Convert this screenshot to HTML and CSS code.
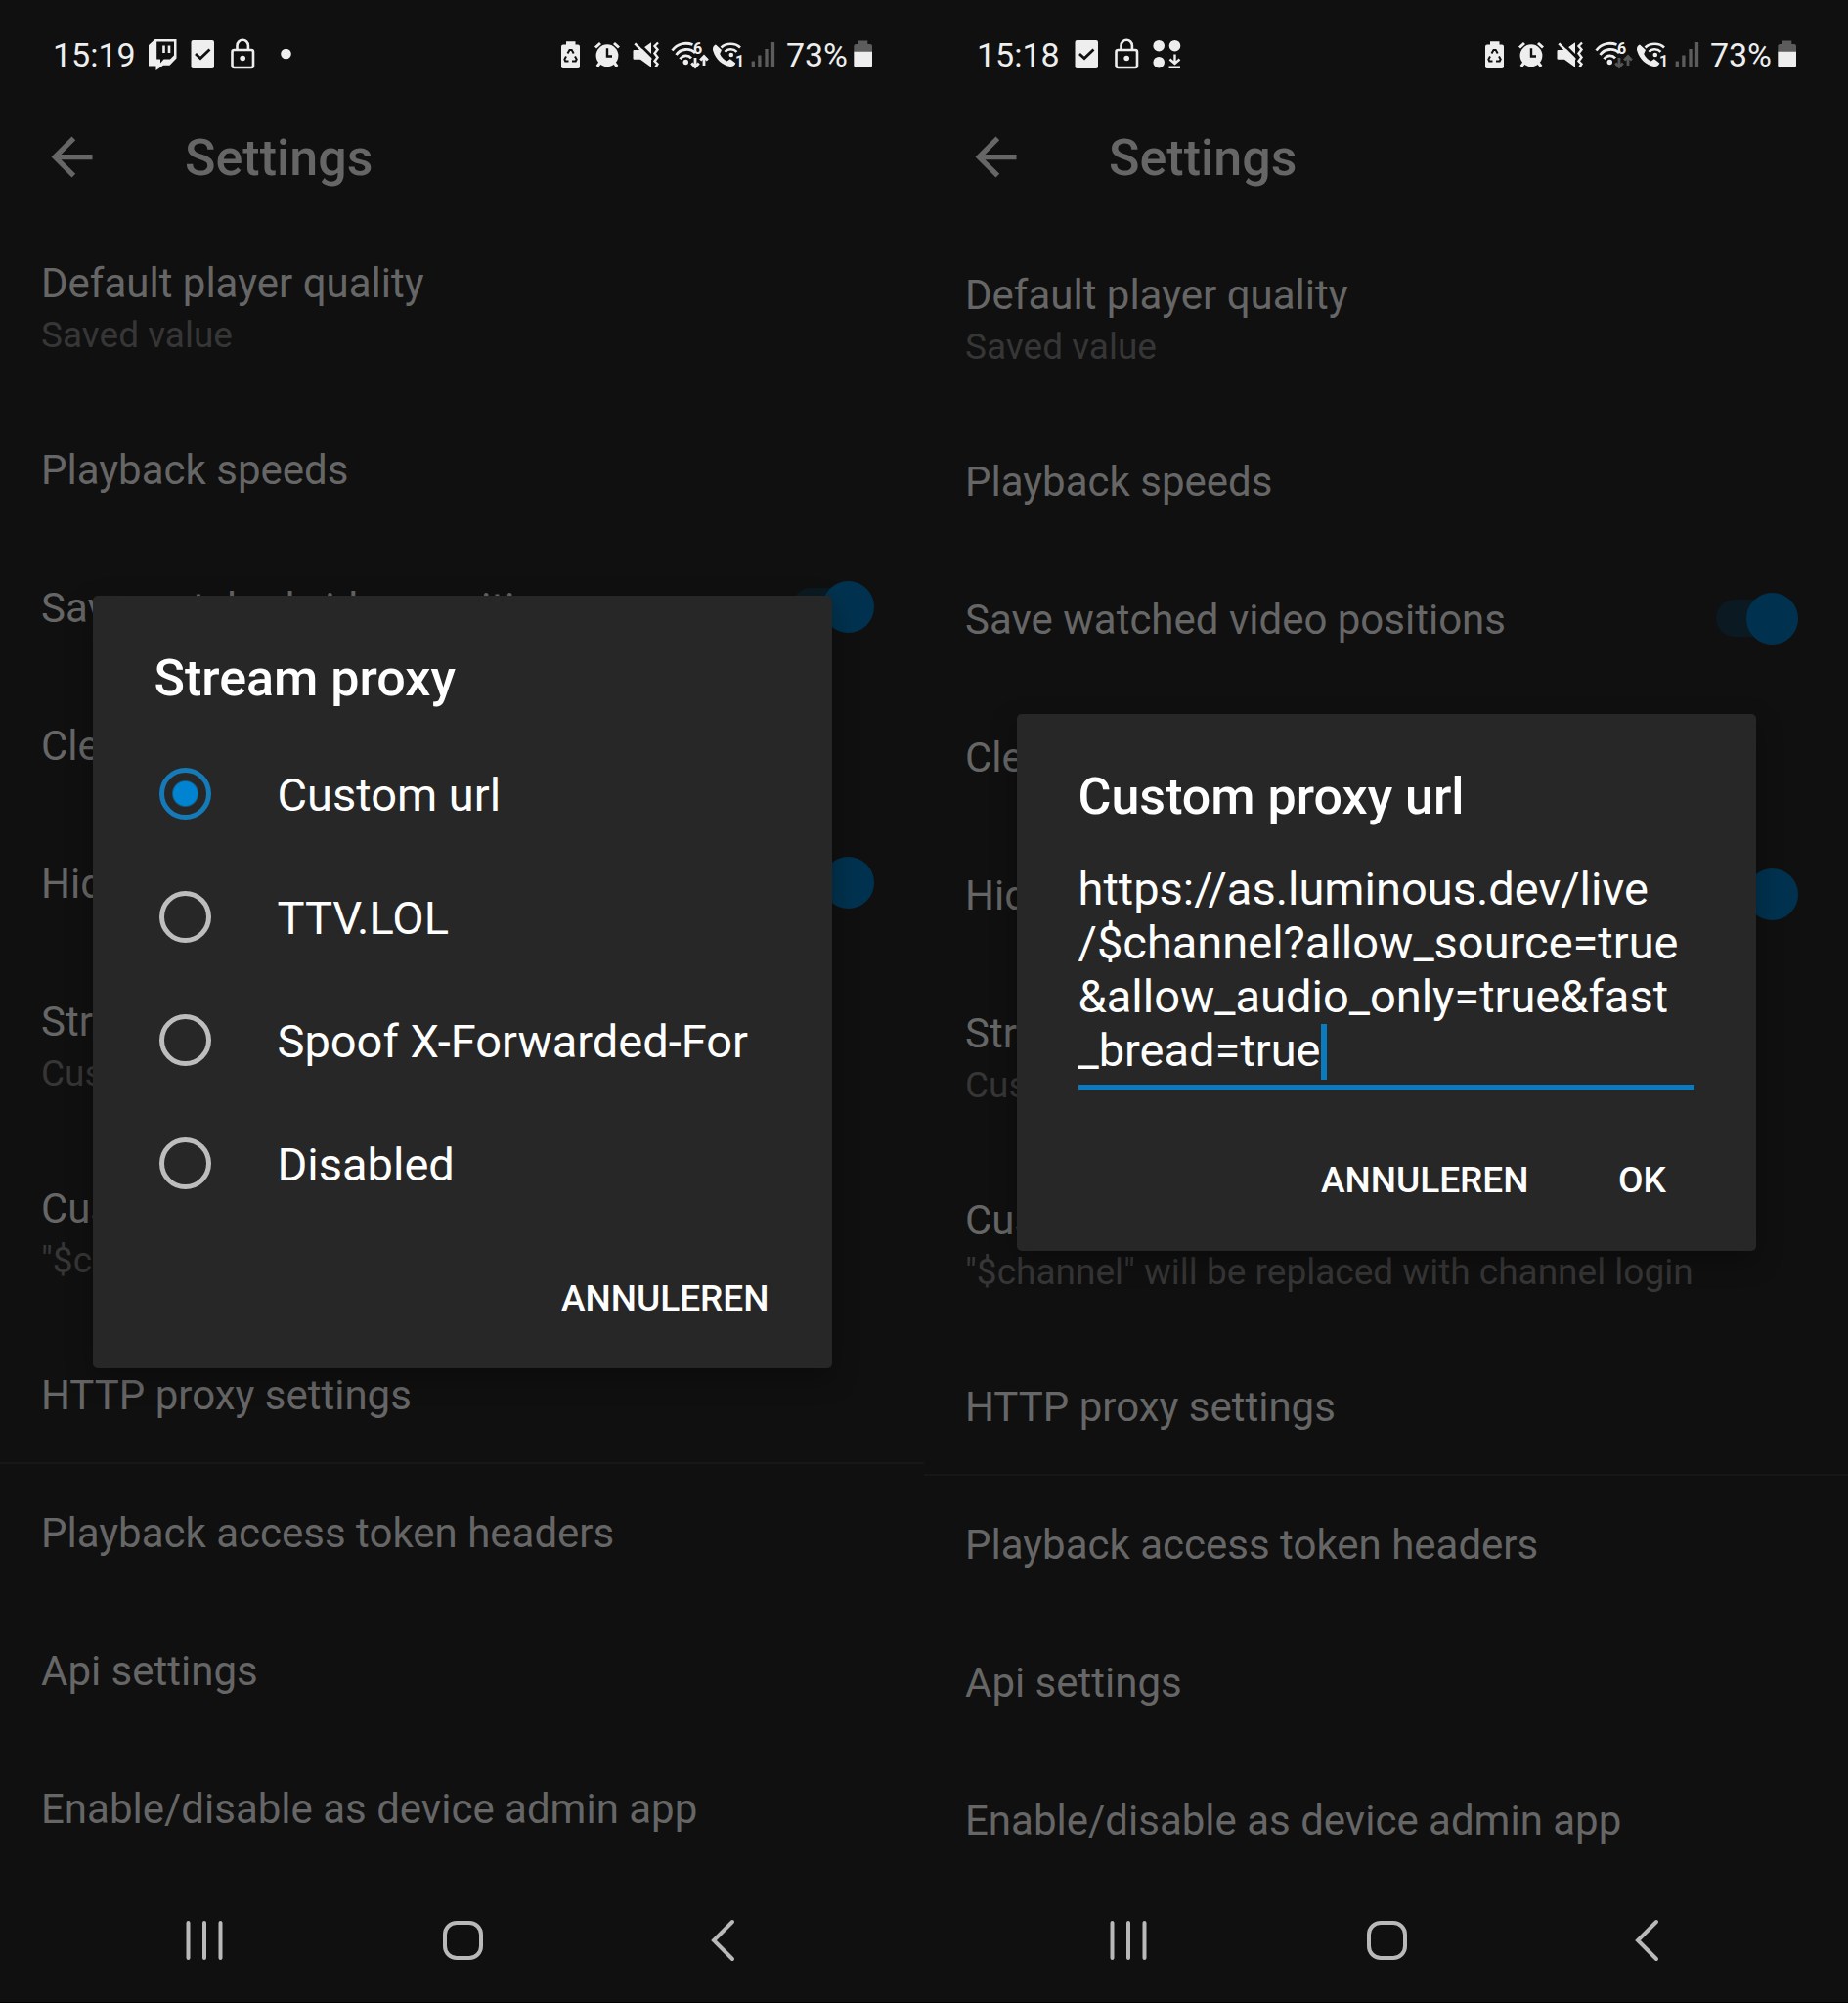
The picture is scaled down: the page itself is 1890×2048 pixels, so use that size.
FILE: index.html
```html
<!DOCTYPE html>
<html lang="nl">
<head>
  <meta charset="UTF-8">
  <title>Settings - Stream proxy</title>
  <meta name="viewport" content="width=device-width, initial-scale=1.0">
  <link rel="stylesheet" href="styles.css">
</head>
<body>

<!-- icon sprite -->
<svg class="sprite" aria-hidden="true">
  <symbol id="i-twitch" viewBox="0 0 41 36">
    <path fill="#eee" d="M12.500 3H34.500V22.500L27.500 29.700H21L13.500 35V30.500H6V9z"/>
    <path fill="#101010" d="M14.200 5.500H32V19.500L28 23.500H21.500L18 27.500V23.500H14.200z"/>
    <path stroke="#eee" stroke-width="2.600" d="M21.500 9.500V17M27 9.500V17"/>
  </symbol>
  <symbol id="i-check" viewBox="0 0 41 36">
    <rect x="8.500" y="4" width="23.500" height="29" rx="2" fill="#eee"/>
    <path d="M13 18l5 4.500 9.500-9" fill="none" stroke="#101010" stroke-width="2.800"/>
  </symbol>
  <symbol id="i-lock" viewBox="0 0 41 36">
    <rect x="9.500" y="14" width="21.500" height="18" rx="2" fill="none" stroke="#eee" stroke-width="2.600"/>
    <path d="M14.500 14V9.500a5.700 5.700 0 0 1 11.400 0V14" fill="none" stroke="#eee" stroke-width="2.600"/>
    <circle cx="20.200" cy="22.500" r="2.800" fill="#eee"/>
  </symbol>
  <symbol id="i-dot" viewBox="0 0 41 36">
    <circle cx="23.500" cy="18" r="5.300" fill="#eee"/>
  </symbol>
  <symbol id="i-apps" viewBox="0 0 41 36">
    <g fill="#eee">
      <circle cx="12.200" cy="9.700" r="5.800"/>
      <circle cx="28.500" cy="9.700" r="5.800"/>
      <circle cx="12.200" cy="26.700" r="5.800"/>
    </g>
    <path d="M28.500 18.500V28M23.500 23.500l5 4.500 5-4.500M22.500 31.700H34" fill="none" stroke="#eee" stroke-width="2.400"/>
  </symbol>
  <symbol id="i-recycle" viewBox="0 0 30 36">
    <path fill="#eee" d="M9 5.300h9.500v3.300H21a2 2 0 0 1 2 2V31a2 2 0 0 1-2 2H6a2 2 0 0 1-2-2V10.600a2 2 0 0 1 2-2h3z"/>
    <path fill="none" stroke="#101010" stroke-width="2" d="M10.500 17.500l2-3.500h2.200l2 3.500M18 20.500l1.700 3-1 2H15M11.500 25.500H8.200l-.8-2 1.600-3"/>
  </symbol>
  <symbol id="i-alarm" viewBox="0 0 42 36">
    <circle cx="21" cy="19.700" r="11.400" fill="#eee"/>
    <path fill="none" stroke="#eee" stroke-width="3" d="M9 11.500L14 7M33 11.500L28 7M10.800 31l3-4M31.200 31l-3-4"/>
    <path fill="none" stroke="#101010" stroke-width="2.400" d="M21 12.300v8.200h5"/>
  </symbol>
  <symbol id="i-mute" viewBox="0 0 38 36">
    <path fill="#eee" d="M6.500 14H13L24 6.300V31.700L13 23.700H6.500a1 1 0 0 1-1-1V15a1 1 0 0 1 1-1z"/>
    <path stroke="#101010" stroke-width="3" d="M9.500 5.500L26 22"/>
    <path stroke="#eee" stroke-width="2.600" d="M7.300 7.300L24 24"/>
    <path fill="none" stroke="#eee" stroke-width="2.400" d="M31 6.500l-3.500 3.500 3 3.500-3 4 3 4-3 4 3 3-2 3"/>
  </symbol>
  <symbol id="i-wifi" viewBox="0 0 46 36">
    <g fill="none" stroke="#eee" stroke-width="2.800">
      <path d="M7.500 14.500C13 7 21.500 6 28.500 8.500"/>
      <path d="M11.500 19C16 12.500 25.500 11.500 31 17"/>
      <path d="M15.500 23.300C18.500 18.800 24 18.800 27 22.300"/>
    </g>
    <circle cx="21.300" cy="26.500" r="2.700" fill="#eee"/>
    <text x="29" y="18" class="icon-digit">6</text>
    <path fill="none" stroke="currentColor" stroke-width="2.800" d="M31 22v9M27.200 27.500L31 31.500l3.800-4M40 30v-9M36.200 24.500L40 20.500l3.800 4"/>
  </symbol>
  <symbol id="i-call" viewBox="0 0 38 36">
    <path fill="#eee" d="M6 8.500C3 10 2.500 12.500 3.500 15.500C6 23.500 12.500 29.500 20.500 31C23.500 31.400 25.500 30 26.300 27.500L20.800 23.300L17.500 25.600C14.500 24.300 11.800 21.500 10.200 18L12 14z"/>
    <path fill="none" stroke="#eee" stroke-width="2.600" d="M11.500 11.500C16.500 6.500 26 6.500 31 11.500M15.500 15.800C18.500 12.300 24 12.300 27.500 15.800"/>
    <circle cx="21.800" cy="19" r="2.300" fill="#eee"/>
    <text x="26" y="31" class="icon-digit">1</text>
  </symbol>
  <symbol id="i-signal" viewBox="0 0 34 36">
    <path stroke="#5c5c5c" stroke-width="3.300" d="M6.300 25.500v6M12.900 19.500v12M20 13v18.500M26.500 6v25.500"/>
  </symbol>
  <symbol id="i-battery" viewBox="0 0 27 36">
    <path fill="#5c5c5c" d="M8.700 4.500h9.600V8H21a2 2 0 0 1 2 2v6H4.300v-6a2 2 0 0 1 2-2h2.400z"/>
    <path fill="#eee" d="M4.300 15.800H23V30a2 2 0 0 1-2 2H6.300a2 2 0 0 1-2-2z"/>
  </symbol>
  <symbol id="i-arrow" viewBox="0 0 24 24">
    <path fill="currentColor" d="M20 11H7.830l5.590-5.590L12 4l-8 8 8 8 1.410-1.410L7.830 13H20z"/>
  </symbol>
  <symbol id="i-recents" viewBox="0 0 48 48">
    <path stroke="#b9b9b9" stroke-width="4" stroke-linecap="round" d="M8.500 6v36M25 6v36M41.500 6v36"/>
  </symbol>
  <symbol id="i-home" viewBox="0 0 48 48">
    <rect x="6" y="6" width="37" height="36" rx="12" fill="none" stroke="#b9b9b9" stroke-width="4"/>
  </symbol>
  <symbol id="i-back" viewBox="0 0 48 48">
    <path fill="none" stroke="#b9b9b9" stroke-width="4" stroke-linecap="round" d="M36 5L17 24l19 19"/>
  </symbol>
</svg>

<main class="screens">

  <section class="phone">
    <div class="status-bar">
      <span class="status-text">15:19</span>
      <div class="status-icons">
        <svg width="41" height="36"><use href="#i-twitch"/></svg>
        <svg width="41" height="36"><use href="#i-check"/></svg>
        <svg width="41" height="36"><use href="#i-lock"/></svg>
        <svg width="41" height="36"><use href="#i-dot"/></svg>
      </div>
      <div class="status-icons status-right">
        <svg width="30" height="36"><use href="#i-recycle"/></svg>
        <svg width="42" height="36"><use href="#i-alarm"/></svg>
        <svg width="38" height="36"><use href="#i-mute"/></svg>
        <svg width="46" height="36"><use href="#i-wifi"/></svg>
        <svg width="38" height="36"><use href="#i-call"/></svg>
        <svg width="34" height="36"><use href="#i-signal"/></svg>
        <span class="status-text percent">73%</span>
        <svg width="27" height="36"><use href="#i-battery"/></svg>
      </div>
    </div>

    <header class="app-bar">
      <button class="icon-button" aria-label="Back"><svg width="63" height="63"><use href="#i-arrow"/></svg></button>
      <h1>Settings</h1>
    </header>

    <div class="list-wrap">
      <div class="list scrolled">
        <button class="row"><span class="row-title">Default player quality</span><span class="row-sub">Saved value</span></button>
        <button class="row"><span class="row-title">Playback speeds</span></button>
        <label class="row row-switch"><span class="row-title">Save watched video positions</span><input type="checkbox" class="switch" checked></label>
        <button class="row"><span class="row-title">Clear video positions</span></button>
        <label class="row row-switch"><span class="row-title">Hide watched ads</span><input type="checkbox" class="switch" checked></label>
        <button class="row"><span class="row-title">Stream proxy</span><span class="row-sub">Custom url</span></button>
        <button class="row"><span class="row-title">Custom proxy url</span><span class="row-sub">"$channel" will be replaced with channel login</span></button>
        <button class="row row-last"><span class="row-title">HTTP proxy settings</span></button>
        <button class="row"><span class="row-title">Playback access token headers</span></button>
        <button class="row"><span class="row-title">Api settings</span></button>
        <button class="row"><span class="row-title">Enable/disable as device admin app</span></button>
      </div>
    </div>

    <nav class="nav-bar">
      <button class="icon-button" aria-label="Recents"><svg width="48" height="48"><use href="#i-recents"/></svg></button>
      <button class="icon-button" aria-label="Home"><svg width="48" height="48"><use href="#i-home"/></svg></button>
      <button class="icon-button" aria-label="Back"><svg width="48" height="48"><use href="#i-back"/></svg></button>
    </nav>

    <div class="overlay">
      <div class="dialog" role="dialog" aria-labelledby="stream-title">
        <h2 id="stream-title">Stream proxy</h2>
        <div class="options">
          <label class="option"><input type="radio" name="proxy" checked><span>Custom url</span></label>
          <label class="option"><input type="radio" name="proxy"><span>TTV.LOL</span></label>
          <label class="option"><input type="radio" name="proxy"><span>Spoof X-Forwarded-For</span></label>
          <label class="option"><input type="radio" name="proxy"><span>Disabled</span></label>
        </div>
        <div class="actions">
          <button class="action">ANNULEREN</button>
        </div>
      </div>
    </div>
  </section>

  <section class="phone">
    <div class="status-bar">
      <span class="status-text">15:18</span>
      <div class="status-icons">
        <svg width="41" height="36"><use href="#i-check"/></svg>
        <svg width="41" height="36"><use href="#i-lock"/></svg>
        <svg width="41" height="36"><use href="#i-apps"/></svg>
      </div>
      <div class="status-icons status-right">
        <svg width="30" height="36"><use href="#i-recycle"/></svg>
        <svg width="42" height="36"><use href="#i-alarm"/></svg>
        <svg width="38" height="36"><use href="#i-mute"/></svg>
        <svg class="idle" width="46" height="36"><use href="#i-wifi"/></svg>
        <svg width="38" height="36"><use href="#i-call"/></svg>
        <svg width="34" height="36"><use href="#i-signal"/></svg>
        <span class="status-text percent">73%</span>
        <svg width="27" height="36"><use href="#i-battery"/></svg>
      </div>
    </div>

    <header class="app-bar">
      <button class="icon-button" aria-label="Back"><svg width="63" height="63"><use href="#i-arrow"/></svg></button>
      <h1>Settings</h1>
    </header>

    <div class="list-wrap">
      <div class="list">
        <button class="row"><span class="row-title">Default player quality</span><span class="row-sub">Saved value</span></button>
        <button class="row"><span class="row-title">Playback speeds</span></button>
        <label class="row row-switch"><span class="row-title">Save watched video positions</span><input type="checkbox" class="switch" checked></label>
        <button class="row"><span class="row-title">Clear video positions</span></button>
        <label class="row row-switch"><span class="row-title">Hide watched ads</span><input type="checkbox" class="switch" checked></label>
        <button class="row"><span class="row-title">Stream proxy</span><span class="row-sub">Custom url</span></button>
        <button class="row"><span class="row-title">Custom proxy url</span><span class="row-sub">"$channel" will be replaced with channel login</span></button>
        <button class="row row-last"><span class="row-title">HTTP proxy settings</span></button>
        <button class="row"><span class="row-title">Playback access token headers</span></button>
        <button class="row"><span class="row-title">Api settings</span></button>
        <button class="row"><span class="row-title">Enable/disable as device admin app</span></button>
      </div>
    </div>

    <nav class="nav-bar">
      <button class="icon-button" aria-label="Recents"><svg width="48" height="48"><use href="#i-recents"/></svg></button>
      <button class="icon-button" aria-label="Home"><svg width="48" height="48"><use href="#i-home"/></svg></button>
      <button class="icon-button" aria-label="Back"><svg width="48" height="48"><use href="#i-back"/></svg></button>
    </nav>

    <div class="overlay">
      <div class="dialog" role="dialog" aria-labelledby="url-title">
        <h2><label id="url-title" for="proxy-url">Custom proxy url</label></h2>
        <div class="field">
          <textarea id="proxy-url" rows="4" spellcheck="false">https://as.luminous.dev/live
/$channel?allow_source=true
&amp;allow_audio_only=true&amp;fast
_bread=true</textarea>
          <span class="caret"></span>
        </div>
        <div class="actions">
          <button class="action">ANNULEREN</button>
          <button class="action">OK</button>
        </div>
      </div>
    </div>
  </section>

</main>

</body>
</html>
```
FILE: styles.css
```css
* {
  box-sizing: border-box;
}

body {
  margin: 0;
  background: #000;
  color: #666;
  font-family: Roboto, "Liberation Sans", sans-serif;
}

button {
  padding: 0;
  border: none;
  background: none;
  color: inherit;
  font-family: inherit;
  text-align: left;
  cursor: pointer;
}

svg {
  display: block;
}

.sprite {
  display: none;
}

.screens {
  display: grid;
  grid-template-columns: 1fr 1fr;
  grid-template-rows: minmax(0, 1fr);
  height: 100vh;
}

.phone {
  position: relative;
  display: flex;
  flex-direction: column;
  overflow: hidden;
  background: #101010;
  border-bottom: 1px solid #000;
}

/* status bar */
.status-bar {
  display: flex;
  flex-shrink: 0;
  align-items: center;
  gap: 7px;
  height: 90px;
  padding: 20px 49px 0 54px;
  color: #eee;
}

.status-text {
  padding-top: 2px;
  font-size: 34px;
  line-height: 40px;
}

.status-icons {
  display: flex;
  align-items: center;
}

.status-right {
  margin-left: auto;
}

.percent {
  margin: 0 2px 0 6px;
}

.idle {
  color: #555;
}

.icon-digit {
  font-size: 16px;
  font-weight: 700;
  fill: #eee;
}

/* toolbar */
.app-bar {
  display: flex;
  flex-shrink: 0;
  align-items: center;
  gap: 84px;
  height: 141px;
  padding: 0 42px;
}

h1,
h2 {
  margin: 0;
  padding-top: 2px;
  font-size: 52px;
  line-height: 62px;
  font-weight: 500;
}

/* settings list */
.list-wrap {
  flex: 1;
  min-height: 0;
  overflow: hidden;
}

.list {
  display: flex;
  flex-direction: column;
}

.scrolled {
  margin-top: -12px;
}

.row {
  display: flex;
  flex-direction: column;
  gap: 7px;
  padding: 46px 51px 46px 42px;
}

.row-title {
  font-size: 42px;
  line-height: 49px;
}

.row-sub {
  font-size: 37px;
  line-height: 43px;
  color: #363636;
}

.row-switch {
  flex-direction: row;
  justify-content: space-between;
}

.row-last {
  padding-bottom: 44px;
  border-bottom: 2px solid #171717;
}

/* thumb is taller than the track, so it hangs over both edges */
.switch {
  appearance: none;
  display: flex;
  align-items: center;
  justify-content: flex-end;
  width: 84px;
  height: 38px;
  margin: 4px 0 0;
  background: #0b1a22;
  border-radius: 19px;
}

.switch::after {
  content: "";
  flex-shrink: 0;
  width: 53px;
  height: 53px;
  border-radius: 50%;
  background: #00324f;
}

/* bottom navigation */
.nav-bar {
  display: grid;
  flex-shrink: 0;
  grid-template-columns: repeat(3, 28%);
  justify-content: center;
  align-items: center;
  justify-items: center;
  height: 127px;
}

/* dialogs */
.overlay {
  position: absolute;
  inset: 0 0 39px;
  display: flex;
  align-items: center;
  justify-content: center;
}

.dialog {
  width: 80%;
  padding: 52px 32px 9px;
  border-radius: 5px;
  background: #272727;
  box-shadow: 0 10px 28px rgba(0, 0, 0, 0.3);
  color: #fff;
}

.dialog h2 {
  padding-left: 31px;
  padding-right: 31px;
}

.options {
  padding: 23px 31px 12px;
}

.option {
  display: flex;
  align-items: center;
  gap: 68px;
  height: 126px;
  padding-left: 5px;
  font-size: 47px;
  line-height: 55px;
}

.option span {
  padding-top: 3px;
}

.option input {
  appearance: none;
  width: 53px;
  height: 53px;
  margin: 0;
  border: 5px solid #bdbdbd;
  border-radius: 50%;
}

.option input:checked {
  border-color: #147ab8;
  background: radial-gradient(circle, #0084d1 12px, transparent 14px);
}

.field {
  position: relative;
  margin: 35px 31px 30px;
}

.field textarea {
  display: block;
  width: 100%;
  height: 233px;
  padding: 0;
  border: none;
  border-bottom: 5px solid #0b7bbf;
  outline: none;
  background: none;
  color: #fff;
  font-family: inherit;
  font-size: 47px;
  line-height: 55px;
  resize: none;
  overflow: hidden;
}

.caret {
  position: absolute;
  left: 248px;
  bottom: 10px;
  width: 6px;
  height: 57px;
  background: #0b7bbf;
}

.actions {
  display: flex;
  justify-content: flex-end;
}

.action {
  min-width: 168px;
  height: 126px;
  padding: 0 32px;
  font-size: 37px;
  font-weight: 500;
  text-align: center;
}
```
